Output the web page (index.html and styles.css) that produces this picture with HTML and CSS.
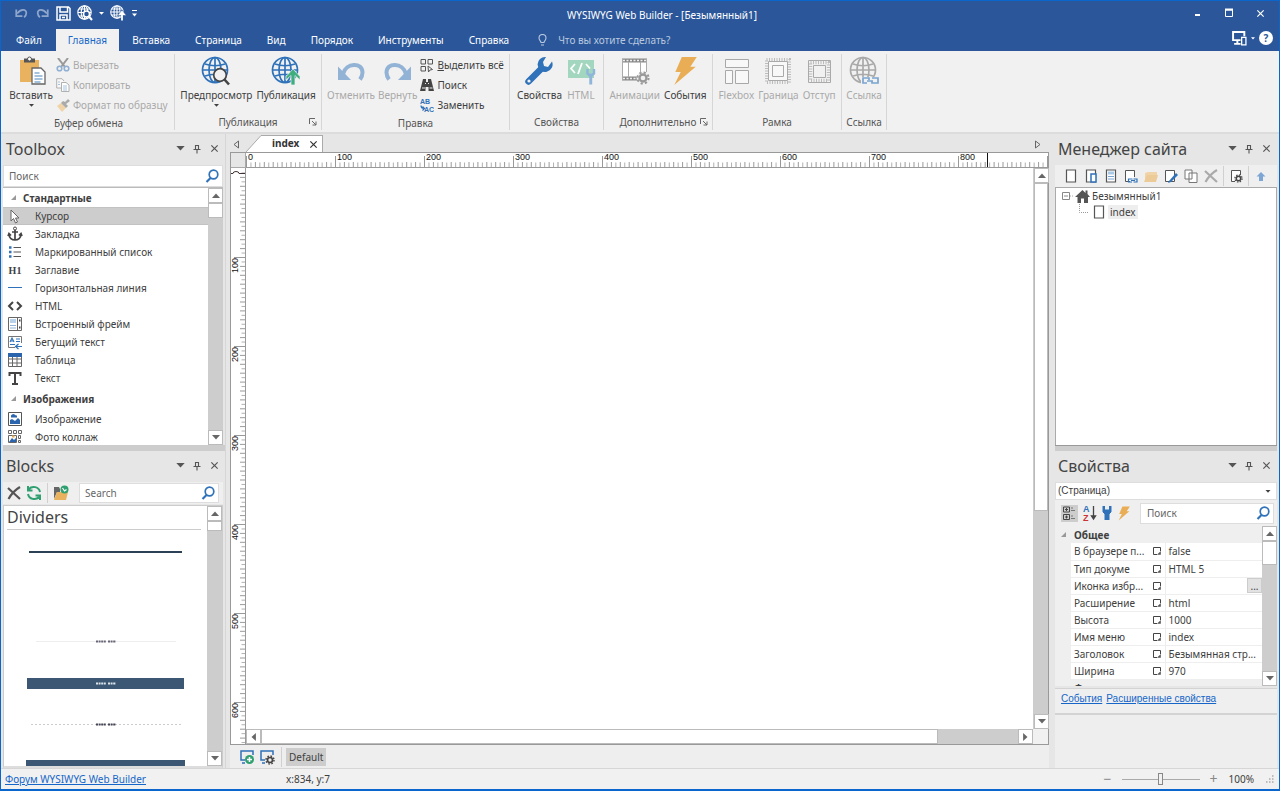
FILE: index.html
```html
<!DOCTYPE html>
<html lang="ru">
<head>
<meta charset="utf-8">
<title>WYSIWYG Web Builder</title>
<link rel="stylesheet" href="styles.css">
</head>
<body>
<svg class="defs" aria-hidden="true">
  <symbol id="undo-s" viewBox="0 0 16 16"><path d="M3 8.500C7 3.500 13.500 3 13.500 8c0 2-1 3.500-2.500 5" fill="none" stroke="currentColor" stroke-width="2"/><path d="M2 4v7.500h7" fill="none" stroke="currentColor" stroke-width="2"/></symbol>
  <symbol id="undo" viewBox="0 0 30 30"><path d="M2 10.500V24h13z" fill="#92b3d6"/><path d="M7 18C10 6.500 26.500 6 26.500 16.500q0 3.500-2.500 7" fill="none" stroke="#92b3d6" stroke-width="4"/></symbol>
  <symbol id="globe" viewBox="0 0 30 30"><g fill="none" stroke="currentColor" stroke-width="1.700"><circle cx="14" cy="14" r="12.500"/><ellipse cx="14" cy="14" rx="6" ry="12.500"/><path d="M14 1v26M2 14h25M4 8q10 3.500 20 0M4 20q10-3.500 20 0"/></g></symbol>
  <symbol id="lens" viewBox="0 0 14 14"><circle cx="8.500" cy="5.500" r="4.300" fill="none" stroke="#2f72b9" stroke-width="1.700"/><path d="M5.500 9L1.500 13" stroke="#2f72b9" stroke-width="2.200"/></symbol>
  <symbol id="pin" viewBox="0 0 10 10"><path d="M3 1.500h4M3.500 1v4.500M6.500 1v4.500M1.500 5.500h7M5 6v3.500" fill="none" stroke="#555" stroke-width="1.100"/></symbol>
  <symbol id="cross" viewBox="0 0 10 10"><path d="M1.500 1.500l7 7M8.500 1.500l-7 7" stroke="currentColor" stroke-width="1.300"/></symbol>
  <symbol id="down" viewBox="0 0 10 6"><path d="M0 0h10L5 5.500z" fill="currentColor"/></symbol>
  <symbol id="up" viewBox="0 0 10 6"><path d="M0 6h10L5 .5z" fill="currentColor"/></symbol>
  <symbol id="left" viewBox="0 0 6 10"><path d="M6 0v10L.5 5z" fill="currentColor"/></symbol>
  <symbol id="right" viewBox="0 0 6 10"><path d="M0 0v10l5.500-5z" fill="currentColor"/></symbol>
  <symbol id="fold" viewBox="0 0 6 6"><path d="M6 0v6H0z" fill="#999"/></symbol>
  <symbol id="launch" viewBox="0 0 8 8"><path d="M.5 6V.5H6M3 3l4 4M7 3.500V7H3.500" fill="none" stroke="#666"/></symbol>
  <symbol id="gear" viewBox="0 0 12 12"><circle cx="6" cy="6" r="3" fill="none" stroke="currentColor" stroke-width="2"/><circle cx="6" cy="6" r="4.800" fill="none" stroke="currentColor" stroke-width="1.700" stroke-dasharray="1.900 1.870"/></symbol>
  <symbol id="bolt" viewBox="0 0 24 28"><path d="M9 1h14l-6 9h5L2 27l6-12H3z" fill="#e9ae55"/></symbol>
  <symbol id="page" viewBox="0 0 12 14"><path d="M1.500 1h9v12h-9z" fill="#fff" stroke="#555" stroke-width="1.200"/></symbol>
  <symbol id="xmark" viewBox="0 0 14 14"><path d="M1 2l12 11M13 1Q6 5 1.500 13" fill="none" stroke="currentColor" stroke-width="2.200"/></symbol>
  <symbol id="tag" viewBox="0 0 8 8"><path d="M7.500 4V.5h-7v7H4" fill="none" stroke="#444"/><path d="M7.800 4v3.800H4z" fill="#555"/></symbol>
</svg>

<header class="titlebar">
  <div class="title-row">
    <div class="quick">
      <button class="dim" aria-label="Отменить"><svg width="15" height="14"><use href="#undo-s"/></svg></button>
      <button class="dim flip" aria-label="Вернуть"><svg width="15" height="14"><use href="#undo-s"/></svg></button>
      <button aria-label="Сохранить"><svg width="15" height="15" viewBox="0 0 15 15"><path d="M1 1h11.500L14 2.500V14H1zM4 1v5h7.500V1M4 14V9h7v5M6 11.500h3" fill="none" stroke="#fff" stroke-width="1.500"/></svg></button>
      <button aria-label="Предпросмотр"><svg width="16" height="16" viewBox="0 0 16 16"><g fill="none" stroke="#fff" stroke-width="1.100"><circle cx="7.500" cy="7.500" r="6.700"/><ellipse cx="7.500" cy="7.500" rx="3.300" ry="6.700"/><path d="M7.500 1v13M1 7.500h13M2 4h11M2 11h11"/><circle cx="9.500" cy="9" r="3" fill="#2b579a" stroke-width="1.500"/><path d="M11.500 11l3.500 4" stroke-width="2"/></g></svg></button>
      <svg class="mini" width="5" height="3"><use href="#down"/></svg>
      <button aria-label="Публикация"><svg width="16" height="16" viewBox="0 0 16 16"><g fill="none" stroke="#fff" stroke-width="1.100"><circle cx="7" cy="7" r="6.300"/><ellipse cx="7" cy="7" rx="3" ry="6.300"/><path d="M7 1v12M1 7h12M2 4h10M2 10h10"/></g><path d="M12 5l4.500 5.500h-9z" fill="#fff" stroke="#2b579a" stroke-width=".6"/><path d="M12 8v7.500" stroke="#fff" stroke-width="1.800"/></svg></button>
      <svg class="mini" width="5" height="7" viewBox="0 0 5 7"><path d="M0 .5h5" stroke="#fff"/><path d="M0 3.500h5L2.500 6.500z" fill="#fff"/></svg>
    </div>
    <h1>WYSIWYG Web Builder - [Безымянный1]</h1>
    <div class="winbtns">
      <button aria-label="Свернуть"><svg width="10" height="10"><path d="M3 7h5" stroke="#fff" stroke-width="2"/></svg></button>
      <button aria-label="Развернуть"><svg width="10" height="10"><path d="M1.500 2h7v6.500h-7z" fill="none" stroke="#fff"/><path d="M1 1.500h8" stroke="#fff" stroke-width="2"/></svg></button>
      <button aria-label="Закрыть"><svg width="9" height="9"><use href="#cross"/></svg></button>
    </div>
  </div>
  <nav class="tabs">
    <button class="tab file">Файл</button>
    <button class="tab active">Главная</button>
    <button class="tab">Вставка</button>
    <button class="tab">Страница</button>
    <button class="tab">Вид</button>
    <button class="tab">Порядок</button>
    <button class="tab">Инструменты</button>
    <button class="tab">Справка</button>
    <label class="ask"><svg width="9" height="12" viewBox="0 0 9 12"><path d="M3 8.500C3 7 1 6.500 1 4a3.500 3.500 0 0 1 7 0c0 2.500-2 3-2 4.500zM3 11h3" fill="none" stroke="#b9c8df" stroke-width="1.100"/></svg><input type="text" placeholder="Что вы хотите сделать?" aria-label="Что вы хотите сделать?"></label>
    <div class="tabs-end">
      <button aria-label="Экран"><svg width="15" height="15" viewBox="0 0 14 14"><path d="M8 8.500H1V1h10.500v4M2 12h6M5 9v3" fill="none" stroke="#fff" stroke-width="1.800"/><path d="M9 6h4v7H9z" fill="none" stroke="#fff" stroke-width="1.200"/></svg></button>
      <svg class="mini" width="4" height="3"><use href="#down"/></svg>
      <button aria-label="Помощь" class="help">?</button>
    </div>
  </nav>
</header>

<section class="ribbon">
  <div class="group g-clip">
    <div class="group-body">
      <button class="big"><svg width="30" height="30" viewBox="0 0 30 30"><path d="M4 4h19v22H4z" fill="#e9b25f"/><path d="M8 2.500h11v4H8z" fill="#555"/><circle cx="13.500" cy="3" r="2" fill="#fff" stroke="#555"/><path d="M16 12h9l4 4v12H16z" fill="#fff" stroke="#666" stroke-width="1.300"/><path d="M18.500 17h5M18.500 20h8M18.500 23h8M18.500 26h6" stroke="#4b84bd" stroke-width="1.200"/></svg><span>Вставить</span><svg class="caret" width="5" height="3"><use href="#down"/></svg></button>
      <div class="stack off">
        <button><svg width="14" height="14" viewBox="0 0 14 14"><path d="M2 0l7 9M12 0L5 9" stroke="#999" stroke-width="2"/><g fill="none" stroke="#8fb0d3" stroke-width="1.600"><circle cx="3.500" cy="10.500" r="2.300"/><circle cx="10.500" cy="10.500" r="2.300"/></g></svg>Вырезать</button>
        <button><svg width="14" height="14" viewBox="0 0 14 14"><path d="M5 10H.7V.7H6L8 3" fill="#f8f8f8" stroke="#b0b0b0"/><path d="M5.500 4.500H10L13 7v6.500H5.500z" fill="#fff" stroke="#b0b0b0"/><path d="M2 4h2M2 6.500h2M7 8h4M7 10h4M7 12h4" stroke="#a8c2de"/></svg>Копировать</button>
        <button><svg width="14" height="14" viewBox="0 0 14 14"><path d="M1 8l4-3 5 5-4 4z" fill="#f1d3a8"/><path d="M5 5l2-2 2 1 3-3 2 2-4 3 2 2-2 2z" fill="#aaa"/></svg>Формат по образцу</button>
      </div>
    </div>
    <h2>Буфер обмена</h2>
  </div>
  <div class="group g-pub">
    <div class="group-body">
      <button class="big"><svg width="30" height="30" viewBox="0 0 30 30"><use href="#globe" class="blue" width="30" height="30"/><circle cx="19" cy="19" r="6.300" fill="#f1f1f1" stroke="#444" stroke-width="1.700"/><path d="M23.500 23.500L28 28.500" stroke="#444" stroke-width="2.600"/></svg><span>Предпросмотр</span><svg class="caret" width="5" height="3"><use href="#down"/></svg></button>
      <button class="big"><svg width="30" height="30" viewBox="0 0 30 30"><use href="#globe" class="blue" width="30" height="30"/><path d="M15 20.500L22 13l7 7.500v3.500l-5-4.500V29h-4v-9.500L15 24z" fill="#3fae7e" stroke="#f1f1f1" stroke-width=".7"/></svg><span>Публикация</span></button>
    </div>
    <h2>Публикация</h2><svg class="launch" width="8" height="8"><use href="#launch"/></svg>
  </div>
  <div class="group g-edit">
    <div class="group-body">
      <button class="big off"><svg width="30" height="30"><use href="#undo"/></svg><span>Отменить</span></button>
      <button class="big off"><svg class="flip" width="30" height="30"><use href="#undo"/></svg><span>Вернуть</span></button>
      <div class="stack">
        <button><svg width="14" height="14" viewBox="0 0 14 14"><path d="M1 1.500h4.500V6H1zM12.500 6V1.500H8V6M1 8.500h4.500V13H1zM8 6h4.500M8 8l4.500 3.500-2.500.5L8.500 14z" fill="none" stroke="#555"/></svg><span><u>В</u>ыделить всё</span></button>
        <button><svg width="14" height="14" viewBox="0 0 14 14"><path d="M3 1h3v3h2V1h3l1 4 2 8H8.500V9h-3v4H0l2-8z" fill="#444"/><path d="M2 10h3M9.500 10h3M5 5.500h1M8 5.500h1" stroke="#eee"/></svg>Поиск</button>
        <button><svg width="14" height="14" viewBox="0 0 14 14"><text x="0" y="6" class="ab">AB</text><text x="4" y="14" class="ab">AC</text><path d="M1 7.500q0 3 3 3M2.500 8.500l2 2-2 2" fill="none" stroke="#2f72b9" stroke-width="1.200"/></svg>Заменить</button>
      </div>
    </div>
    <h2>Правка</h2>
  </div>
  <div class="group g-prop">
    <div class="group-body">
      <button class="big"><svg width="30" height="30" viewBox="0 0 30 30"><path d="M4.500 25.500L17 13" stroke="#2f72b9" stroke-width="6.500" stroke-linecap="round"/><path d="M28 5.500a7.500 7.500 0 1 1-6-4.500l-3 5 1 4 4 1z" fill="#2f72b9"/><circle cx="5" cy="25" r="1.600" fill="#f1f1f1"/></svg><span>Свойства</span></button>
      <button class="big off"><svg width="30" height="30" viewBox="0 0 30 30"><path d="M2 4h26v18H2z" fill="#a2d6be"/><path d="M9 8l-4 4.500L9 17M20 8l4 4.500M16 7l-4 11" fill="none" stroke="#fff" stroke-width="1.800"/><path d="M21.500 13v4.500l3 2v9M28 13v4.500l-3 2v9M22 19h5" fill="none" stroke="#8fb5da" stroke-width="2.400"/></svg><span>HTML</span></button>
    </div>
    <h2>Свойства</h2>
  </div>
  <div class="group g-more">
    <div class="group-body">
      <button class="big off"><svg width="30" height="30" viewBox="0 0 30 30"><path d="M2 4h24v20H2z" fill="#fff"/><path d="M2 4.500h25M2 22.500h16" stroke="#888" stroke-width="4"/><path d="M3 4.500h24M3 22.500h15" stroke="#eee" stroke-width="1.700" stroke-dasharray="2 1.500"/><path d="M2.500 3v21M8.500 6v15M20.500 6v12M26.500 3v13" stroke="#aaa"/><g color="#999"><circle cx="23" cy="22" r="6.500" fill="#f1f1f1"/><use href="#gear" x="16" y="15" width="14" height="14"/></g></svg><span>Анимации</span></button>
      <button class="big"><svg width="30" height="30"><use href="#bolt"/></svg><span>События</span></button>
    </div>
    <h2>Дополнительно</h2><svg class="launch" width="8" height="8"><use href="#launch"/></svg>
  </div>
  <div class="group g-frame">
    <div class="group-body">
      <button class="big off"><svg width="30" height="30" viewBox="0 0 30 30"><path d="M4.500 3.500h23v8h-23zM4.500 14.500h7v13h-7zM14.500 14.500h13v13h-13z" fill="#f8f8f8" stroke="#a8a8a8"/></svg><span>Flexbox</span></button>
      <button class="big off"><svg width="30" height="30" viewBox="0 0 30 30"><rect x="3.500" y="3.500" width="23" height="23" fill="none" stroke="#bbb" stroke-width="3" stroke-dasharray="1 1.500"/><path d="M5.500 5.500h19v19h-19zM9.500 9.500h11v11h-11z" fill="#f8f8f8" stroke="#aaa"/></svg><span>Граница</span></button>
      <button class="big off"><svg width="30" height="30" viewBox="0 0 30 30"><rect x="6.500" y="6.500" width="18" height="18" fill="none" stroke="#bbb" stroke-width="3.500" stroke-dasharray="1 1.500"/><path d="M4.500 4.500h22v22h-22zM9.500 9.500h12v12h-12z" fill="none" stroke="#aaa"/></svg><span>Отступ</span></button>
    </div>
    <h2>Рамка</h2>
  </div>
  <div class="group g-link">
    <div class="group-body">
      <button class="big off"><svg width="30" height="30" viewBox="0 0 30 30"><use href="#globe" width="30" height="30"/><path d="M12 21h18v8H12z" fill="#f1f1f1"/><path d="M18 27h-4v-5h6v2M23 22h6v5h-6v-2M18 25h6" fill="none" stroke="#7aa4d0" stroke-width="1.700"/></svg><span>Ссылка</span></button>
    </div>
    <h2>Ссылка</h2>
  </div>
</section>

<main class="workspace">
  <aside class="side">
    <section class="panel">
      <header class="panel-head"><h2>Toolbox</h2><button aria-label="Меню"><svg width="9" height="5"><use href="#down"/></svg></button><button aria-label="Закрепить"><svg width="10" height="10"><use href="#pin"/></svg></button><button aria-label="Закрыть"><svg width="9" height="9"><use href="#cross"/></svg></button></header>
      <label class="search tb-search"><input type="search" placeholder="Поиск" aria-label="Поиск элементов"><svg width="14" height="14"><use href="#lens"/></svg></label>
      <div class="scrollbox">
        <div class="tools">
          <h3><svg width="5" height="5"><use href="#fold"/></svg>Стандартные</h3>
          <ul>
            <li class="sel"><svg width="16" height="16" viewBox="0 0 16 16"><path d="M4 2v11l2.500-2.500L8.500 15l2-1-2-4H12z" fill="#fff" stroke="#666"/></svg>Курсор</li>
            <li><svg width="16" height="16" viewBox="0 0 16 16"><path d="M8 4v10M5 6h6M2 8c0 8 12 8 12 0M1 10l1-2.500L4 9.500M15 10l-1-2.500-2 2" fill="none" stroke="#444" stroke-width="1.700"/><circle cx="8" cy="2.500" r="1.500" fill="none" stroke="#444"/></svg>Закладка</li>
            <li><svg width="16" height="16" viewBox="0 0 16 16"><path d="M2 3.500h2.500M2 8h2.500M2 12.500h2.500" stroke="#2f72b9" stroke-width="2.500"/><path d="M6.500 3.500H14M6.500 8H14M6.500 12.500H14" stroke="#555"/></svg>Маркированный список</li>
            <li><b class="glyph">H1</b>Заглавие</li>
            <li><svg width="16" height="16"><path d="M1 7.500h14" stroke="#2f72b9"/></svg>Горизонтальная линия</li>
            <li><svg width="16" height="16" viewBox="0 0 16 16"><path d="M6 4L2 8l4 4M10 4l4 4-4 4" fill="none" stroke="#444" stroke-width="2"/></svg>HTML</li>
            <li><svg width="16" height="16" viewBox="0 0 16 16"><path d="M1.500 1.500h13v13h-13zM10.500 2v12" fill="#fff" stroke="#666"/><path d="M3 3h6v4H3z" fill="#b7d2ea"/><path d="M3 9.500h6M3 12h6" stroke="#8fb5da"/><path d="M12 4.500h1.500M12 11.500h1.500" stroke="#444" stroke-width="2"/></svg>Встроенный фрейм</li>
            <li><svg width="16" height="16" viewBox="0 0 16 16"><path d="M8 13.500H1.500v-11h13V9" fill="#fff" stroke="#777"/><path d="M3 8l2-4 2 4M4 7h2M9 5h4M9 7.500h4M3 10.500h5M15 12.500H9M11.500 10l-3 2.500 3 2.500" fill="none" stroke="#2f72b9" stroke-width="1.200"/></svg>Бегущий текст</li>
            <li><svg width="16" height="16" viewBox="0 0 16 16"><path d="M1.500 2v12.500h13V2M1.500 7h13M1.500 11h13M5.500 3v11M10 3v11" fill="#fff" stroke="#666"/><path d="M1 1h14v4H1z" fill="#2964ad"/></svg>Таблица</li>
            <li><svg width="16" height="16" viewBox="0 0 16 16"><path d="M2.500 6V3h11v3M8 3v11M5 14h6" fill="none" stroke="#444" stroke-width="2"/></svg>Текст</li>
          </ul>
          <h3 class="second"><svg width="5" height="5"><use href="#fold"/></svg>Изображения</h3>
          <ul>
            <li><svg width="16" height="16" viewBox="0 0 16 16"><path d="M1.500 1.500h13v13h-13z" fill="#fff" stroke="#555"/><path d="M3 13V9l2-1 3 2 3-3 2 2v4zM4 4.500q2-3 5 0h1v2H4z" fill="#2964ad"/></svg>Изображение</li>
            <li><svg width="16" height="16" viewBox="0 0 16 16"><path d="M1.500 1.500h3v3h-3zM6.500 1.500h3v3h-3zM11.500 1.500h3v3h-3zM11.500 6.500h2v3h-2zM11.500 11.500h2v2h-2zM1.500 6.500h8v7h-8z" fill="#fff" stroke="#666"/><path d="M2 13l3-4 2 2 2-2v4z" fill="#2964ad"/><path d="M5 7.500h2.500" stroke="#e9ae55" stroke-width="2"/></svg>Фото коллаж</li>
          </ul>
        </div>
        <div class="vscroll"><button aria-label="Вверх"><svg width="8" height="5"><use href="#up"/></svg></button><i class="thumb short"></i><i class="track"></i><button aria-label="Вниз"><svg width="8" height="5"><use href="#down"/></svg></button></div>
      </div>
      <div class="splitter"></div>
    </section>
    <section class="panel">
      <header class="panel-head"><h2>Blocks</h2><button aria-label="Меню"><svg width="9" height="5"><use href="#down"/></svg></button><button aria-label="Закрепить"><svg width="10" height="10"><use href="#pin"/></svg></button><button aria-label="Закрыть"><svg width="9" height="9"><use href="#cross"/></svg></button></header>
      <div class="toolbar blocks-bar">
        <button aria-label="Удалить"><svg width="14" height="14"><use href="#xmark"/></svg></button>
        <button aria-label="Обновить"><svg width="16" height="16" viewBox="0 0 16 16"><path d="M14 7C13 1.500 6 .5 3 4M2 9c1 5.500 8 6.500 11 3M2 1v4.500h4.500M14 15v-4.500H9.500" fill="none" stroke="#30a070" stroke-width="2"/></svg></button>
        <i class="sep"></i>
        <button aria-label="Открыть папку"><svg width="16" height="16" viewBox="0 0 16 16"><path d="M1 14V2h5l1 2v3H4z" fill="#666"/><path d="M4 7h11l-2 8H1z" fill="#e9b25f"/><circle cx="11.500" cy="4.500" r="4" fill="#30a070"/><path d="M9.500 3l2 3 2-1.500" fill="none" stroke="#fff" stroke-width="1.200"/></svg></button>
        <label class="search"><input type="search" placeholder="Search" aria-label="Search"><svg width="14" height="14"><use href="#lens"/></svg></label>
      </div>
      <div class="scrollbox blocks-box">
        <div class="blocks">
          <h3>Dividers</h3>
          <div class="line"></div>
          <div class="divider pale"><svg width="22" height="3"><path d="M1 1.500h10M13 1.500h8" stroke="#667" stroke-width="2" stroke-dasharray="2 .6"/></svg></div>
          <div class="divider solid"><svg width="22" height="3"><path d="M1 1.500h10M13 1.500h8" stroke="#dde4ea" stroke-width="2" stroke-dasharray="2 .6"/></svg></div>
          <div class="divider dashed"><svg width="22" height="3"><path d="M1 1.500h10M13 1.500h8" stroke="#445" stroke-width="2" stroke-dasharray="2 .6"/></svg></div>
          <div class="divider solid last"></div>
        </div>
        <div class="vscroll"><button aria-label="Вверх"><svg width="8" height="5"><use href="#up"/></svg></button><i class="thumb tiny"></i><i class="track"></i><button aria-label="Вниз"><svg width="8" height="5"><use href="#down"/></svg></button></div>
      </div>
    </section>
  </aside>

  <section class="editor">
    <div class="doc-tabs">
      <button class="nav" aria-label="Назад"><svg width="6" height="9" viewBox="0 0 6 9"><path d="M5.500 1v7L1 4.500z" fill="none" stroke="#666"/></svg></button>
      <div class="doc-tab"><svg class="slope" width="17" height="17" viewBox="0 0 17 17"><path d="M0 17L15 .5h2V17z" fill="#fff"/><path d="M0 17L15 .5h2" fill="none" stroke="#aaa"/></svg><span class="doc-name">index</span><button aria-label="Закрыть index"><svg width="9" height="9"><use href="#cross"/></svg></button></div>
      <button class="nav end" aria-label="Вперёд"><svg width="6" height="9" viewBox="0 0 6 9"><path d="M.5 1v7L5 4.500z" fill="none" stroke="#666"/></svg></button>
    </div>
    <div class="board">
      <div class="corner"></div>
      <div class="ruler-h">
        <svg class="ticks" width="100%" height="14"><defs><pattern id="th" width="89" height="14" patternUnits="userSpaceOnUse"><path d="M.5 3v11" stroke="#999"/><path d="M4.950 14V9.500M13.850 14V9.500M22.750 14V9.500M31.650 14V9.500M40.550 14V9.500M49.450 14V9.500M58.350 14V9.500M67.250 14V9.500M76.150 14V9.500M85.050 14V9.500" stroke="#b0b0b0"/><path d="M9.400 14V9M18.300 14V9M27.200 14V9M36.100 14V9M45 14V9M53.900 14V9M62.800 14V9M71.700 14V9M80.600 14V9" stroke="#999"/></pattern></defs><rect width="100%" height="14" fill="url(#th)"/></svg>
        <div class="nums"><span>0</span><span>100</span><span>200</span><span>300</span><span>400</span><span>500</span><span>600</span><span>700</span><span class="marked">800</span></div>
      </div>
      <div class="ruler-v">
        <svg class="ticks" width="14" height="100%"><defs><pattern id="tv" width="14" height="89" patternUnits="userSpaceOnUse"><path d="M3 .5h11" stroke="#999"/><path d="M14 4.950H10.500M14 13.850H10.500M14 22.750H10.500M14 31.650H10.500M14 40.550H10.500M14 49.450H10.500M14 58.350H10.500M14 67.250H10.500M14 76.150H10.500M14 85.050H10.500" stroke="#b0b0b0"/><path d="M14 9.400H9M14 18.300H9M14 27.200H9M14 36.100H9M14 45H9M14 53.900H9M14 62.800H9M14 71.700H9M14 80.600H9" stroke="#999"/></pattern></defs><rect width="14" height="100%" fill="url(#tv)"/><path d="M0 0h14v4H0z" fill="#fff"/><path d="M0 5.500h2q0-2 3-2t3 2h6" fill="none" stroke="#433"/></svg>
        <div class="nums"><span></span><span>100</span><span>200</span><span>300</span><span>400</span><span>500</span><span>600</span></div>
      </div>
      <div class="canvas"></div>
      <div class="vscroll page-v"><button aria-label="Вверх"><svg width="8" height="5"><use href="#up"/></svg></button><i class="thumb"></i><i class="track"></i><button aria-label="Вниз"><svg width="8" height="5"><use href="#down"/></svg></button></div>
      <div class="hscroll"><button aria-label="Влево"><svg width="5" height="8"><use href="#left"/></svg></button><i class="thumb"></i><i class="track"></i><button aria-label="Вправо"><svg width="5" height="8"><use href="#right"/></svg></button></div>
    </div>
    <div class="views">
      <button aria-label="Добавить вид"><svg width="16" height="16" viewBox="0 0 16 16"><path d="M6 11H2V2h12v4M3 14h3" fill="none" stroke="#2f72b9" stroke-width="1.500"/><circle cx="10.500" cy="10.500" r="4.500" fill="#30a070"/><path d="M8 10.500h5M10.500 8v5" stroke="#fff" stroke-width="1.500"/></svg></button>
      <button aria-label="Настройки вида"><svg width="16" height="16" viewBox="0 0 16 16" color="#444"><path d="M6 11H2V2h12v4M3 14h3" fill="none" stroke="#2f72b9" stroke-width="1.500"/><use href="#gear" x="6" y="6" width="10" height="10"/></svg></button>
      <i class="sep"></i>
      <button class="default">Default</button>
    </div>
  </section>

  <aside class="side right">
    <section class="panel">
      <header class="panel-head"><h2>Менеджер сайта</h2><button aria-label="Меню"><svg width="9" height="5"><use href="#down"/></svg></button><button aria-label="Закрепить"><svg width="10" height="10"><use href="#pin"/></svg></button><button aria-label="Закрыть"><svg width="9" height="9"><use href="#cross"/></svg></button></header>
      <div class="toolbar site-bar">
        <button aria-label="Новая страница"><svg width="12" height="14"><use href="#page"/></svg></button>
        <button aria-label="Шаблон"><svg width="12" height="14" viewBox="0 0 12 14"><use href="#page" width="12" height="14"/><path d="M6 5h5v8H6z" fill="#fff" stroke="#2f72b9" stroke-width="1.500"/></svg></button>
        <button aria-label="Содержимое"><svg width="12" height="14" viewBox="0 0 12 14"><use href="#page" width="12" height="14"/><path d="M3 4h6" stroke="#a9c8e6" stroke-width="3"/><path d="M3 7.500h6M3 10h6" stroke="#7aa4d0"/></svg></button>
        <button aria-label="Ссылка"><svg width="14" height="14" viewBox="0 0 14 14"><path d="M6 12.500H1.500v-11h9V8" fill="#fff" stroke="#555"/><path d="M8 13H4.500v-3h4M9.500 10H13v3H9.500M7 11.500h4" fill="none" stroke="#2f72b9" stroke-width="1.200"/></svg></button>
        <button aria-label="Папка"><svg width="14" height="14" viewBox="0 0 14 14"><path d="M1 12V4l3-1h9v3" fill="#f1d3a8"/><path d="M3 6h11l-2 7H0z" fill="#edcb98"/></svg></button>
        <button aria-label="Изменить"><svg width="14" height="14" viewBox="0 0 14 14"><path d="M1.500 1.500h9v11h-9z" fill="#fff" stroke="#555"/><path d="M5 12l7-8 2 2-7 7-3 1z" fill="#2f72b9"/></svg></button>
        <button aria-label="Копировать"><svg width="14" height="14" viewBox="0 0 14 14"><path d="M1 1h7v9H1zM5 4h8v9.500H5z" fill="#fff" stroke="#777"/></svg></button>
        <button class="pale-x" aria-label="Удалить"><svg width="14" height="14"><use href="#xmark"/></svg></button>
        <i class="sep"></i>
        <button aria-label="Свойства"><svg width="14" height="14" viewBox="0 0 14 14" color="#444"><path d="M6 12.500H2.500v-11h9V6" fill="#fff" stroke="#555"/><use href="#gear" x="5" y="5" width="9" height="9"/></svg></button>
        <i class="sep"></i>
        <button aria-label="Вверх"><svg width="10" height="10" viewBox="0 0 10 10"><path d="M5 1l4.500 4.500H7V10H3V5.500H.5z" fill="#7ea6d5"/></svg></button>
      </div>
      <div class="tree">
        <div class="node root"><svg width="12" height="12" viewBox="0 0 12 12"><path d="M1.500 2.500h7v7h-7zM3 6h4" fill="none" stroke="#888"/><path d="M9 6h3" stroke="#aaa" stroke-dasharray="1 1"/></svg><svg width="15" height="15" viewBox="0 0 15 15"><path d="M0 8l7.500-7 3 3V1.500h2V5L15 8h-2v6H9V9.500H6V14H2.500V8z" fill="#555"/></svg><span>Безымянный1</span></div>
        <div class="node leaf"><svg width="12" height="16" viewBox="0 0 12 16"><path d="M1.500 0v8.500H11" fill="none" stroke="#999" stroke-dasharray="1 1"/></svg><svg width="12" height="14"><use href="#page"/></svg><span class="picked">index</span></div>
      </div>
      <div class="splitter blank"></div>
    </section>
    <section class="panel">
      <header class="panel-head"><h2>Свойства</h2><button aria-label="Меню"><svg width="9" height="5"><use href="#down"/></svg></button><button aria-label="Закрепить"><svg width="10" height="10"><use href="#pin"/></svg></button><button aria-label="Закрыть"><svg width="9" height="9"><use href="#cross"/></svg></button></header>
      <div class="combo"><select aria-label="Объект"><option>(Страница)</option></select><svg width="6" height="3"><use href="#down"/></svg></div>
      <div class="toolbar prop-bar">
        <button class="pressed" aria-label="По категориям"><svg width="15" height="16" viewBox="0 0 15 16"><path d="M1.500 2h6v5h-6zM1.500 9.500h6v5h-6zM3 4.500h3M4.500 3v3M3 12h3M4.500 10.500v3" fill="none" stroke="#444"/><path d="M9 3h2M9 5.500h4M9 11h2M9 13.500h4" stroke="#777"/></svg></button>
        <button aria-label="По алфавиту"><svg width="14" height="16" viewBox="0 0 14 16"><text x="0" y="7" class="az-a">A</text><text x="0" y="15.500" class="az-z">Z</text><path d="M10.500 1v12M8.500 11l2 3 2-3z" fill="#444" stroke="#444" stroke-width="1.300"/></svg></button>
        <button aria-label="Свойства"><svg width="10" height="14" viewBox="0 0 10 14"><path d="M1 0h1.500v4h5V0H9v6L7 8v6H3V8L1 6z" fill="#2f72b9" stroke="#2f72b9"/></svg></button>
        <button aria-label="События"><svg width="14" height="15"><use href="#bolt"/></svg></button>
        <label class="search"><input type="search" placeholder="Поиск" aria-label="Поиск свойств"><svg width="14" height="14"><use href="#lens"/></svg></label>
      </div>
      <div class="scrollbox props-box">
        <div class="props">
          <h3><svg width="5" height="5"><use href="#fold"/></svg>Общее</h3>
          <table>
            <tr><th>В браузере п...</th><td class="mk"><svg width="8" height="8"><use href="#tag"/></svg></td><td>false</td></tr>
            <tr><th>Тип докуме</th><td class="mk"><svg width="8" height="8"><use href="#tag"/></svg></td><td>HTML 5</td></tr>
            <tr><th>Иконка избр...</th><td class="mk"><svg width="8" height="8"><use href="#tag"/></svg></td><td class="pick"><button>...</button></td></tr>
            <tr><th>Расширение</th><td class="mk"><svg width="8" height="8"><use href="#tag"/></svg></td><td>html</td></tr>
            <tr><th>Высота</th><td class="mk"><svg width="8" height="8"><use href="#tag"/></svg></td><td>1000</td></tr>
            <tr><th>Имя меню</th><td class="mk"><svg width="8" height="8"><use href="#tag"/></svg></td><td>index</td></tr>
            <tr><th>Заголовок</th><td class="mk"><svg width="8" height="8"><use href="#tag"/></svg></td><td>Безымянная стр...</td></tr>
            <tr><th>Ширина</th><td class="mk"><svg width="8" height="8"><use href="#tag"/></svg></td><td>970</td></tr>
          </table>
          <h3>
            <svg width="5" height="5"><use href="#fold"/></svg>Ф</h3>
        </div>
        <div class="vscroll"><button aria-label="Вверх"><svg width="8" height="5"><use href="#up"/></svg></button><i class="thumb mid"></i><i class="track"></i><button aria-label="Вниз"><svg width="8" height="5"><use href="#down"/></svg></button></div>
      </div>
      <div class="links"><a href="#">События</a><a href="#">Расширенные свойства</a></div>
      <div class="filler"></div>
    </section>
  </aside>
</main>

<footer class="status">
  <a href="#">Форум WYSIWYG Web Builder</a>
  <span class="coords">x:834, y:7</span>
  <div class="zoom"><span class="sign">−</span><input type="range" min="0" max="100" value="50" aria-label="Масштаб"><span class="sign">+</span><span class="percent">100%</span>
  <svg width="9" height="9" viewBox="0 0 9 9"><path d="M7 1h1.500M7 4h1.500M7 7h1.500M4 4h1.500M4 7h1.500M1 7h1.500" stroke="#aaa" stroke-width="1.500"/></svg></div>
</footer>
</body>
</html>
```
FILE: styles.css
```css
* { box-sizing: border-box; }
html, body { height: 100%; }
body {
  margin: 0;
  display: flex;
  flex-direction: column;
  border: 1px solid #0a66cc;
  border-width: 1px 1px 2px;
  background: #e6e6e6;
  color: #404040;
  font: 10px/14px "Noto Sans", "Open Sans", sans-serif;
  overflow: hidden;
}
.defs { display: none; }
svg { display: block; flex: none; }
h1, h2, h3, ul { margin: 0; padding: 0; font-size: inherit; font-weight: normal; list-style: none; }
button { padding: 0; border: 0; background: none; color: inherit; font: inherit; display: flex; align-items: center; justify-content: center; }
input, select { min-width: 0; border: 0; outline: 0; padding: 0; background: none; color: inherit; font: inherit; appearance: none; }
input::placeholder { color: inherit; opacity: 1; }
a { color: #1566c8; text-decoration: underline; }

/* Title bar and tabs */
.titlebar { background: #2b579a; color: #fff; padding-left: 2px; }
.title-row { display: grid; grid-template-columns: 1fr auto 1fr; align-items: center; height: 28px; }
.title-row h1 { padding-left: 42px; }
.quick { display: flex; align-items: center; gap: 6px; padding: 0 0 4px 11px; }
.dim { color: #8fa6cc; }
.flip { transform: scaleX(-1); }
.winbtns { display: flex; justify-content: flex-end; gap: 22px; padding: 0 14px 4px 0; }
.tabs { display: flex; align-items: stretch; height: 22px; }
.tab { padding: 0 12px 0 13px; }
.tab.file { padding: 0 14px 0 13px; }
.tab.active { background: #f1f1f1; color: #1668c8; padding: 0 12px; }
.ask { display: flex; align-items: center; gap: 11px; padding-left: 17px; color: #b9c8df; }
.ask input { width: 140px; }
.tabs-end { display: flex; align-items: center; gap: 4px; margin-left: auto; padding: 0 6px 4px 0; }
.help { width: 14px; height: 14px; border-radius: 50%; background: #fff; color: #2b579a; font-weight: bold; }

/* Ribbon */
.ribbon { display: flex; height: 83px; padding: 3px 2px 2px; background: #f1f1f1; border-bottom: 2px solid #dcdcdc; }
.group { position: relative; display: flex; flex-direction: column; border-right: 1px solid #d6d6d6; padding: 1px 4px 0; }
.group h2 { margin-top: auto; text-align: center; line-height: 16px; color: #555; }
.group-body { display: flex; justify-content: center; gap: 4px; }
.launch { position: absolute; right: 4px; bottom: 4px; }
.big { flex-direction: column; align-self: flex-start; justify-content: flex-start; line-height: 14px; padding-top: 1px; }
.big span { margin-top: 2px; }
.caret { margin-top: 2px; }
.stack { display: flex; flex-direction: column; }
.stack button { height: 20px; gap: 3px; justify-content: flex-start; }
.off { color: #a9a9a9; }
.blue { color: #2f72b9; }
.ab { font: bold 7px "Liberation Sans", sans-serif; fill: #2f72b9; }
.g-clip { min-width: 172px; }
.g-clip .group-body { gap: 3px; }
.g-pub { min-width: 147px; }
.g-edit { min-width: 188px; }
.g-edit .group-body { gap: 3px; }
.g-prop { min-width: 94px; }
.g-more { min-width: 109px; }
.g-frame { min-width: 129px; }
.g-link { min-width: 45px; }

/* Workspace */
.workspace { flex: 1; min-height: 0; display: grid; grid-template-columns: 225px minmax(0, 1fr) 226px; grid-template-rows: minmax(0, 1fr); column-gap: 4px; }
.side { display: grid; grid-template-columns: minmax(0, 1fr); grid-template-rows: repeat(2, minmax(0, 1fr)); padding-left: 2px; border-right: 1px solid #d6d6d6; }
.side.right { padding: 0 2px; border: 0; }
.panel { display: flex; flex-direction: column; min-height: 0; }
.panel-head { display: flex; align-items: center; height: 31px; flex: none; padding: 0 6px 2px 3px; gap: 7px; color: #555; }
.panel-head h2 { flex: 1; font-size: 16px; line-height: 22px; color: #444; }
.panel-head button { width: 10px; height: 10px; }
.search { display: flex; align-items: center; flex: 1; min-width: 0; background: #fff; border: 1px solid #ddd; padding: 0 3px; color: #666; }
.search input { flex: 1; padding-left: 2px; }
.tb-search { flex: none; height: 22px; margin-right: 2px; }
.scrollbox { flex: 1; min-height: 0; display: flex; background: #fff; border-top: 1px solid #bbb; margin-right: 2px; }
.tools, .blocks, .props { flex: 1; min-width: 0; overflow: hidden; }
.tools h3, .props h3 { display: flex; align-items: center; gap: 7px; font-weight: bold; height: 19px; padding-left: 8px; }
.tools h3.second { height: 23px; }
.tools li { display: flex; align-items: center; gap: 12px; height: 18px; padding-left: 4px; }
.tools li.sel { background: #cdcdcd; border: 1px solid #c2c2c2; border-width: 1px 0; }
.glyph { width: 16px; font: bold 10px "Liberation Serif", serif; text-align: center; }
.splitter { height: 6px; flex: none; background: #cdcdcd; }
.splitter.blank { border-top: 1px solid #999; }

.vscroll { display: flex; flex-direction: column; flex: none; width: 15px; background: #cdcdcd; color: #666; }
.vscroll button, .hscroll button { width: 15px; height: 15px; flex: none; background: #fff; border: 1px solid #bbb; }
.thumb { background: #fff; border: 1px solid #bbb; }
.track { flex: 1; }
.short { height: 15px; }
.tiny { height: 10px; }
.mid { height: 24px; }

.toolbar { display: flex; align-items: center; flex: none; background: #efefef; }
.sep { width: 1px; height: 20px; background: #d0d0d0; }
.blocks-bar { height: 22px; gap: 5px; padding: 0 4px; margin-right: 2px; color: #555; }
.blocks-bar .search { height: 20px; margin-left: 5px; }
.blocks-box { margin-top: 1px; border: 1px solid #ccc; border-bottom: 2px solid #ddd; }
.blocks h3 { font-size: 16px; line-height: 23px; margin: 0 6px 0 3px; border-bottom: 1px solid #ccc; color: #444; }
.line { height: 2px; margin: 21px 25px 83px; background: #2d4156; }
.divider { display: flex; align-items: center; justify-content: center; height: 11px; margin: 0 23px 30px; }
.pale { background: linear-gradient(#eee, #eee) center / 140px 1px no-repeat; margin-bottom: 31px; }
.solid { background: #3b5773; }
.dashed { background: repeating-linear-gradient(90deg, #ccc 0 2px, #fff 2px 4px) center / 150px 1px no-repeat; }
.divider.last { margin: 0 22px; }

/* Editor */
.editor { display: flex; flex-direction: column; min-width: 0; }
.doc-tabs { display: flex; align-items: flex-end; height: 18px; padding-right: 8px; }
.nav { height: 16px; margin-left: 3px; }
.nav.end { margin-left: auto; }
.doc-tab { display: flex; align-items: stretch; height: 17px; margin-left: 7px; color: #333; }
.doc-name { background: #fff; border-top: 1px solid #aaa; padding: 0 10px 0 9px; font-weight: bold; }
.doc-tab button { background: #fff; border: 1px solid #aaa; border-width: 1px 1px 0 0; padding-right: 4px; }
.board { flex: 1; min-height: 0; display: grid; grid-template-columns: 15px minmax(0, 1fr) 15px; grid-template-rows: 15px minmax(0, 1fr) 15px; border: 1px solid #999; background: #f1f1f1; }
.canvas { background: #fff; }
.corner { background: #e6e6e6; border: 1px solid #aaa; border-width: 0 1px 1px 0; }
.ruler-h { grid-column: 2 / 4; display: grid; overflow: hidden; border-bottom: 1px solid #999; background: #fff; }
.ruler-v { grid-row: 2 / 4; display: grid; overflow: hidden; border-right: 1px solid #999; background: #fff; }
.ticks, .nums { grid-area: 1 / 1; }
.nums { display: flex; font: 9px/9px "Liberation Sans", sans-serif; color: #111; }
.nums span { flex: 0 0 89px; padding-left: 2px; }
.nums .marked { background: linear-gradient(#111, #111) 29px 0 / 1px 100% no-repeat; }
.ruler-v .nums { flex-direction: column; }
.ruler-v .nums span { writing-mode: vertical-rl; transform: rotate(180deg); padding: 0 0 1px 3px; text-align: right; width: 12px; }
.page-v { border-left: 1px solid #ccc; }
.page-v .thumb { height: 328px; }
.hscroll { display: flex; grid-column: 2; background: #cdcdcd; color: #666; }
.hscroll .thumb { width: 86%; }
.views { display: flex; align-items: center; gap: 4px; height: 23px; padding-left: 9px; background: #eee; }
.views .sep { margin-left: 2px; }
.default { height: 18px; padding: 0 3px; background: #cdcdcd; }

/* Site manager and properties */
.site-bar { height: 22px; gap: 6px; padding-left: 9px; }
.site-bar button { width: 14px; }
.site-bar .sep { margin: 0 -1px; }
.pale-x { color: #aaa; }
.tree { flex: 1; background: #fff; border: 1px solid #aaa; border-bottom: 0; }
.node { display: flex; align-items: center; gap: 3px; height: 16px; padding-left: 5px; }
.root { gap: 2px; }
.leaf { padding-left: 22px; }
.leaf .picked { background: #eee; padding: 0 2px; }
.combo { display: flex; align-items: center; height: 18px; flex: none; background: #fff; border: 1px solid #ddd; padding: 0 5px 0 2px; }
.combo select { flex: 1; font: 10px/14px "Liberation Sans", sans-serif; }
.prop-bar { height: 26px; gap: 5px; padding: 0 3px 0 6px; }
.prop-bar .search { height: 21px; margin-left: 4px; }
.prop-bar .search input { padding-left: 3px; }
.pressed { width: 17px; height: 17px; background: #cdcdcd; }
.az-a, .az-z { font: bold 9px "Liberation Sans", sans-serif; fill: #2f72b9; }
.az-z { fill: #c33; }
.props-box { flex: 0 1 160px; margin: 0; border: 0; background: #efefef; }
.props h3 { height: 17px; padding-left: 6px; gap: 8px; }
table { width: calc(100% - 16px); margin-left: 16px; border-collapse: collapse; background: #fff; table-layout: fixed; }
tr { height: 17px; }
th, td { padding: 0 0 0 3px; font-weight: normal; text-align: left; line-height: 16px; border-bottom: 1px solid #eee; white-space: nowrap; overflow: hidden; }
th { width: 78px; }
td.mk { width: 16px; padding: 0 4px; }
td + td { border-left: 1px solid #eee; }
td.pick { padding: 0; }
.pick button { width: 15px; height: 15px; margin-left: auto; background: #e2e2e2; border: 1px solid #ccc; }
.links { display: flex; gap: 4px; margin-top: 2px; padding: 3px 6px 7px; border: 1px solid #d3d3d3; border-width: 1px 0 2px; background: #efefef; font: 10px/14px "Liberation Sans", sans-serif; }
.filler { flex: 1; background: #eee; }

.status { display: flex; align-items: center; height: 21px; padding: 0 5px 0 4px; background: #f1f1f1; border-top: 1px solid #d6d6d6; }
.coords { margin-left: 140px; }
.zoom { display: flex; align-items: center; gap: 8px; margin-left: auto; }
.sign { font-size: 14px; color: #888; }
.percent { margin: 0 3px; }
.zoom input { width: 78px; height: 14px; background: linear-gradient(#aaa, #aaa) center / 100% 1px no-repeat; }
.zoom input::-webkit-slider-thumb { appearance: none; width: 5px; height: 12px; background: #f1f1f1; border: 1px solid #888; }
```
